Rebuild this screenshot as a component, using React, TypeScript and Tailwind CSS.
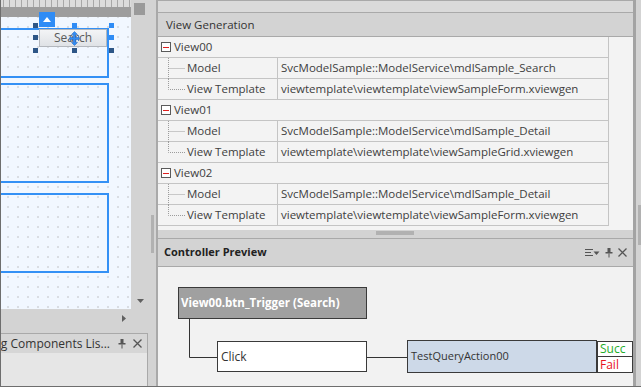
import React from 'react';

type ViewRow = { name: string; model: string; template: string };

const views: ViewRow[] = [
  {
    name: 'View00',
    model: 'SvcModelSample::ModelService\\mdlSample_Search',
    template: 'viewtemplate\\viewtemplate\\viewSampleForm.xviewgen',
  },
  {
    name: 'View01',
    model: 'SvcModelSample::ModelService\\mdlSample_Detail',
    template: 'viewtemplate\\viewtemplate\\viewSampleGrid.xviewgen',
  },
  {
    name: 'View02',
    model: 'SvcModelSample::ModelService\\mdlSample_Detail',
    template: 'viewtemplate\\viewtemplate\\viewSampleForm.xviewgen',
  },
];

const PinIcon = () => (
  <svg width="8" height="10" viewBox="0 0 8 10" className="text-[#555]">
    <rect x="2.5" y="0" width="3" height="4" fill="currentColor" />
    <rect x="0.5" y="4" width="7" height="1.5" fill="currentColor" />
    <rect x="3.5" y="5.5" width="1" height="4" fill="currentColor" />
  </svg>
);

const CloseIcon = () => (
  <svg width="9" height="9" viewBox="0 0 9 9">
    <path d="M0.5 0.5 L8.5 8.5 M8.5 0.5 L0.5 8.5" stroke="#555" strokeWidth="1.3" />
  </svg>
);

const MenuIcon = () => (
  <svg width="15" height="8" viewBox="0 0 15 8">
    <rect x="0" y="0" width="8" height="1" fill="#555" />
    <rect x="0" y="3" width="6" height="1" fill="#555" />
    <rect x="0" y="6" width="8" height="1" fill="#555" />
    <path d="M8.5 2.5 L14.5 2.5 L11.5 6 Z" fill="#555" />
  </svg>
);

// dotted tree connector drawn in the first column of a child row
const TreeLine = ({ last }: { last: boolean }) => (
  <svg className="absolute left-0 top-0" width="30" height="21" viewBox="0 0 30 21">
    <path
      d={last ? 'M10.5 0 V10.5 H27' : 'M10.5 0 V21 M10.5 10.5 H27'}
      stroke="#9c9c9c"
      strokeWidth="1"
      strokeDasharray="1 1"
      fill="none"
    />
  </svg>
);

const ChildRow = ({ label, value, last }: { label: string; value: string; last: boolean }) => (
  <div className="flex h-[21px] border-b border-[#c4c4c4]">
    <div className="relative flex w-[120px] shrink-0 items-center border-r border-[#c4c4c4] pl-[29px]">
      <TreeLine last={last} />
      {label}
    </div>
    <div className="flex items-center whitespace-nowrap pl-[3px]">{value}</div>
  </div>
);

const Handle = ({ x, y, dark }: { x: number; y: number; dark?: boolean }) => (
  <div
    className={`absolute h-[5px] w-[5px] ${dark ? 'bg-[#2d5687]' : 'bg-[#2f8cf5]'}`}
    style={{ left: x, top: y }}
  />
);

const Designer = () => (
  <div className="relative flex h-[309px] w-[130px] shrink-0 flex-col overflow-hidden">
    {/* ruler */}
    <div className="h-[7px] bg-[#dcdcdc] bg-[linear-gradient(90deg,#a8a8a8_1px,transparent_1px)] bg-[length:6px_4px] bg-[position:2px_2px] bg-no-repeat-y" />
    <div className="h-[10px] bg-[#9d9d9d]" />
    <div className="flex-1 bg-[#f1f7ff] bg-[radial-gradient(circle,#d9dde3_1px,transparent_1.2px)] bg-[length:10px_10px] bg-[position:2px_5px]" />

    {/* panels on the form */}
    <div className="absolute left-[-3px] top-[28px] h-[50px] w-[111px] border-2 border-[#3390f5]" />
    <div className="absolute left-[-3px] top-[83px] h-[100px] w-[111px] border-2 border-[#3390f5]" />
    <div className="absolute left-[-3px] top-[193px] h-[80px] w-[111px] border-2 border-[#3390f5]" />

    {/* selected button */}
    <div className="absolute left-[38px] top-[29px] flex h-[18px] w-[68px] items-center justify-center border border-[#b3b7bd] bg-[linear-gradient(#f3f4f6,#dfe2e6)] text-[12px] text-[#5a5a5a]">
      Search
    </div>
    <div className="absolute left-[38px] top-[12px] flex h-[15px] w-[16px] items-center justify-center bg-[#2f8cf5]">
      <svg width="8" height="5" viewBox="0 0 8 5">
        <path d="M0 5 L4 0 L8 5 Z" fill="#fff" />
      </svg>
    </div>
    <Handle x={32} y={23} dark />
    <Handle x={71} y={23} />
    <Handle x={108} y={23} />
    <Handle x={32} y={35} dark />
    <Handle x={108} y={35} />
    <Handle x={32} y={48} dark />
    <Handle x={71} y={48} dark />
    <Handle x={108} y={48} dark />
    <svg className="absolute left-[68px] top-[31px]" width="11" height="15" viewBox="0 0 11 15">
      <path
        d="M5.5 0.5 L8.5 3.5 H6.5 V6.5 H9.5 V5 L10.5 7.5 L9.5 10 V8.5 H6.5 V11.5 H8.5 L5.5 14.5 L2.5 11.5 H4.5 V8.5 H1.5 V10 L0.5 7.5 L1.5 5 V6.5 H4.5 V3.5 H2.5 Z"
        fill="#2f8cf5"
        stroke="#1c5fb8"
        strokeWidth="0.5"
      />
    </svg>
  </div>
);

export default function App() {
  return (
    <div className="flex h-[387px] w-[641px] border-x border-b border-[#6e6e6e] bg-[#d3d3d3] font-['Open_Sans',sans-serif] text-[11.5px] text-[#404040]">
      {/* left dock */}
      <div className="flex w-[147px] shrink-0 flex-col">
        <div className="flex">
          <Designer />
          <div className="relative h-[309px] flex-1">
            <div className="absolute left-[3px] top-[3px] h-[12px] w-[11px] bg-[#9a9a9a]" />
            <svg className="absolute bottom-[6px] left-[6px]" width="7" height="4" viewBox="0 0 7 4">
              <path d="M0 0 H7 L3.5 4 Z" fill="#606060" />
            </svg>
          </div>
        </div>
        <div className="flex h-[18px] items-center justify-end pr-[22px]">
          <svg width="4" height="7" viewBox="0 0 4 7">
            <path d="M0 0 V7 L4 3.5 Z" fill="#606060" />
          </svg>
        </div>
        <div className="h-[6px]" />
        <div className="flex flex-1 flex-col border-r border-t border-[#a9a9a9]">
          <div className="flex h-[19px] items-center bg-[#d6d6d6]">
            <div className="flex w-[109px] shrink-0 justify-end overflow-hidden whitespace-nowrap text-[12px] text-[#333]">
              Binding Components Lis...
            </div>
            <div className="ml-[8px] flex items-center">
              <PinIcon />
            </div>
            <div className="ml-[7px] flex items-center">
              <CloseIcon />
            </div>
          </div>
          <div className="flex-1 bg-[#e6e6e6]" />
        </div>
      </div>

      {/* vertical splitter */}
      <div className="flex w-[8px] shrink-0 flex-col pl-[3px] pt-[215px]">
        <div className="h-[38px] w-[3px] bg-[radial-gradient(circle,#8a8a8a_0.6px,transparent_0.8px)] bg-[length:2px_2px]" />
      </div>

      {/* right area */}
      <div className="flex w-[477px] shrink-0 flex-col border-l-2 border-[#a9a9a9]">
        <div className="h-[12px] border-t border-[#a9a9a9] bg-[#dadada]" />
        <div className="flex h-[25px] items-center border-y border-[#a9a9a9] bg-[#d3d3d3] pl-[8px] text-[#333]">
          View Generation
        </div>
        <div className="h-[193px] bg-[#f3f3f3]">
          <div className="w-[451px] border-r border-[#c4c4c4]">
            {views.map((v) => (
              <React.Fragment key={v.name}>
                <div className="flex h-[21px] items-center border-b border-[#c4c4c4]">
                  <span className="ml-[3px] flex h-[10px] w-[10px] items-center justify-center border border-[#5a5a5a] bg-white">
                    <span className="h-px w-[6px] bg-[#e02020]" />
                  </span>
                  <span className="ml-[3px]">{v.name}</span>
                </div>
                <ChildRow label="Model" value={v.model} last={false} />
                <ChildRow label="View Template" value={v.template} last />
              </React.Fragment>
            ))}
          </div>
        </div>
        <div className="flex h-[8px] items-start pl-[218px] pt-[1px]">
          <div className="h-[4px] w-[38px] bg-[radial-gradient(circle,#8a8a8a_0.6px,transparent_0.8px)] bg-[length:2px_2px]" />
        </div>
        <div className="flex flex-1 flex-col border-t border-[#a9a9a9]">
          <div className="flex h-[28px] items-center border-b border-[#a9a9a9] bg-[#d3d3d3] pl-[6px] pr-[6px]">
            <span className="text-[11px] font-bold text-[#222]">Controller Preview</span>
            <div className="ml-auto flex items-center gap-[5px]">
              <MenuIcon />
              <PinIcon />
              <CloseIcon />
            </div>
          </div>
          <div className="relative flex-1 bg-[#f2f2f2]">
            <svg className="absolute left-0 top-0" width="260" height="100" viewBox="0 0 260 100">
              <path d="M31.5 52 V90.5 H59" stroke="#333" strokeWidth="1" fill="none" />
              <path d="M209 90.5 H249" stroke="#333" strokeWidth="1" fill="none" />
            </svg>
            <div className="absolute left-[20px] top-[20px] flex h-[32px] w-[189px] items-center border border-[#3a3a3a] bg-[#a0a0a0] pl-[2px] text-[11.5px] font-bold text-white">
              View00.btn_Trigger (Search)
            </div>
            <div className="absolute left-[59px] top-[74px] flex h-[31px] w-[150px] items-center border border-[#3a3a3a] bg-white pl-[3px] text-[12px] text-[#333]">
              Click
            </div>
            <div className="absolute left-[249px] top-[73px] flex h-[33px] w-[190px] items-center border border-[#3a3a3a] bg-[#cdd9e8] pl-[3px] text-[11px] text-[#333]">
              TestQueryAction00
            </div>
            <div className="absolute left-[439px] top-[74px] flex w-[36px] flex-col border border-[#3a3a3a] bg-white text-[12px]">
              <div className="flex h-[15px] items-center border-b border-[#3a3a3a] pl-[2px] text-[#1fae2a]">Succ</div>
              <div className="flex h-[15px] items-center pl-[2px] text-[#e8121e]">Fail</div>
            </div>
          </div>
        </div>
      </div>

      {/* right edge */}
      <div className="flex w-[8px] shrink-0">
        <div className="w-[3px] bg-[#a3a3a3]" />
        <div className="flex-1 bg-[#d3d3d3] pl-[2px] pt-[205px]">
          <div className="h-[40px] w-[3px] bg-[radial-gradient(circle,#8a8a8a_0.6px,transparent_0.8px)] bg-[length:2px_2px]" />
        </div>
      </div>
    </div>
  );
}
